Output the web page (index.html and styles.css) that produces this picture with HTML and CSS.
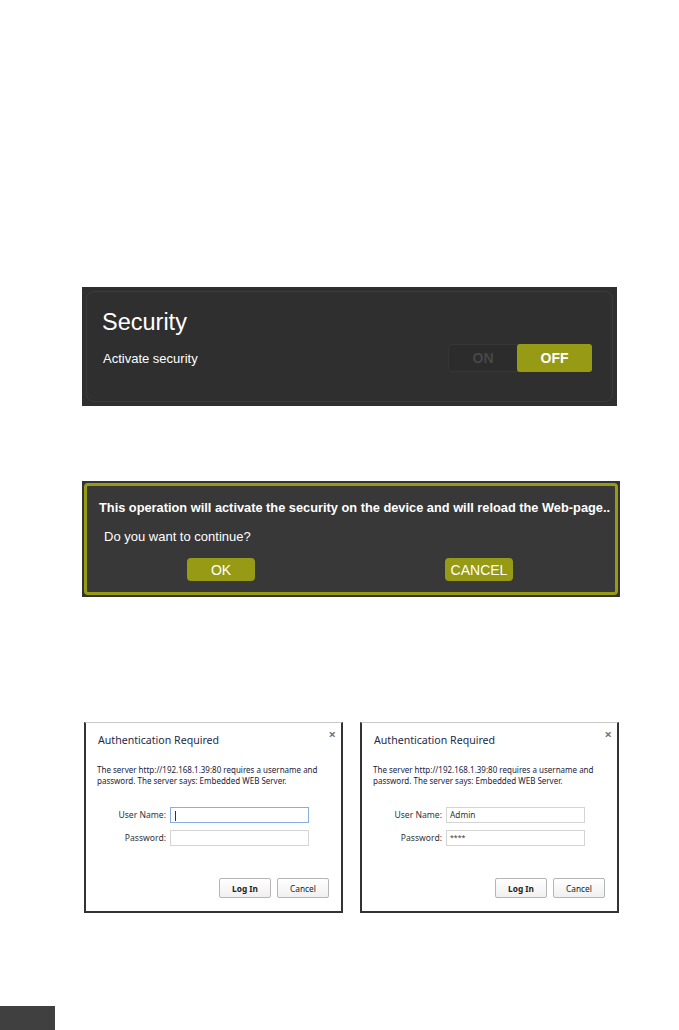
FILE: index.html
```html
<!DOCTYPE html>
<html lang="en">
<head>
    <meta charset="UTF-8">
    <meta name="viewport" content="width=device-width, initial-scale=1.0">
    <title>Security Settings</title>
    <link rel="stylesheet" href="styles.css">
</head>
<body>
    <!-- Security panel -->
    <div class="panel">
        <div class="panel-inner">
            <h2>Security</h2>
            <div class="panel-row">
                <span class="label">Activate security</span>
                <div class="toggle">
                    <span class="toggle-on">ON</span>
                    <span class="toggle-off">OFF</span>
                </div>
            </div>
        </div>
    </div>

    <!-- Confirm dialog -->
    <div class="confirm">
        <div class="confirm-inner">
            <p class="confirm-title">This operation will activate the security on the device and will reload the Web-page..</p>
            <p class="confirm-question">Do you want to continue?</p>
            <div class="confirm-buttons">
                <button class="olive-btn">OK</button>
                <button class="olive-btn">CANCEL</button>
            </div>
        </div>
    </div>

    <!-- Browser auth dialogs -->
    <div class="auth-row">
        <div class="auth">
            <span class="auth-close">&#215;</span>
            <h3>Authentication Required</h3>
            <p class="auth-text">The server http://192.168.1.39:80 requires a username and<br>password. The server says: Embedded WEB Server.</p>
            <div class="auth-fields">
                <label>User Name:</label>
                <div class="auth-input focused"><span class="caret"></span></div>
                <label>Password:</label>
                <div class="auth-input"></div>
            </div>
            <div class="auth-buttons">
                <button class="auth-btn"><b>Log In</b></button>
                <button class="auth-btn">Cancel</button>
            </div>
        </div>
        <div class="auth">
            <span class="auth-close">&#215;</span>
            <h3>Authentication Required</h3>
            <p class="auth-text">The server http://192.168.1.39:80 requires a username and<br>password. The server says: Embedded WEB Server.</p>
            <div class="auth-fields">
                <label>User Name:</label>
                <div class="auth-input">Admin</div>
                <label>Password:</label>
                <div class="auth-input stars">****</div>
            </div>
            <div class="auth-buttons">
                <button class="auth-btn"><b>Log In</b></button>
                <button class="auth-btn">Cancel</button>
            </div>
        </div>
    </div>

    <div class="page-tab"></div>
</body>
</html>
```

FILE: styles.css
```css
body {
    margin: 0;
    background: #ffffff;
    font-family: "Liberation Sans", Arial, sans-serif;
    width: 679px;
    height: 1030px;
    position: relative;
    overflow: hidden;
}
.panel {
    margin: 287px 0 0 82px;
    width: 535px;
    height: 119px;
    background: #2f2f2f;
    padding: 4px;
    box-sizing: border-box;
}
.panel-inner {
    height: 100%;
    border: 1px solid #3b3b3b;
    border-radius: 8px;
    box-sizing: border-box;
    padding: 0 20px 0 15px;
}
.panel-inner h2 {
    margin: 15px 0 0 0;
    color: #ffffff;
    font-weight: normal;
    font-size: 23.5px;
    line-height: 30px;
}
.panel-row {
    display: flex;
    justify-content: space-between;
    align-items: center;
    margin-top: 7px;
}
.label {
    color: #ffffff;
    font-size: 13px;
    padding-left: 1px;
}
.toggle {
    display: flex;
    width: 144px;
    height: 28px;
    background: #2c2c2c;
    border: 1px solid #363636;
    border-radius: 4px;
    box-sizing: border-box;
    font-weight: bold;
    font-size: 14px;
}
.toggle-on {
    flex: 1;
    display: flex;
    align-items: center;
    justify-content: center;
    color: #474747;
}
.toggle-off {
    width: 75px;
    display: flex;
    align-items: center;
    justify-content: center;
    color: #ffffff;
    background: #979a14;
    border-radius: 3px;
    margin: -1px -1px -1px 0;
}
.confirm {
    margin: 75px 0 0 82px;
    width: 538px;
    height: 116px;
    background: #333333;
    padding: 2px;
    box-sizing: border-box;
}
.confirm-inner {
    height: 100%;
    border: 3px solid #979a14;
    border-radius: 4px;
    box-sizing: border-box;
    background: #383838;
}
.confirm-title {
    margin: 14px 0 0 12px;
    color: #ffffff;
    font-weight: bold;
    font-size: 12.8px;
    white-space: nowrap;
}
.confirm-question {
    margin: 14px 0 0 17px;
    color: #ffffff;
    font-size: 13px;
}
.confirm-buttons {
    display: flex;
    gap: 190px;
    margin: 14px 0 0 100px;
}
.olive-btn {
    width: 68px;
    height: 23px;
    border: none;
    border-radius: 4px;
    background: #979a14;
    color: #ffffff;
    font-family: "Liberation Sans", Arial, sans-serif;
    font-size: 14px;
    padding: 0;
}
.auth-row {
    display: flex;
    gap: 17px;
    margin: 125px 0 0 84px;
}
.auth {
    position: relative;
    width: 259px;
    height: 191px;
    box-sizing: border-box;
    background: #ffffff;
    border: 1px solid #c8c8c8;
    border-left: 2px solid #333333;
    border-right: 2px solid #333333;
    border-bottom: 2px solid #333333;
    font-family: "Noto Sans", "Open Sans", sans-serif;
    color: #222222;
}
.auth-close {
    position: absolute;
    top: 2px;
    right: 5px;
    color: #777777;
    font-size: 13px;
    font-weight: bold;
}
.auth h3 {
    margin: 10px 0 0 12px;
    font-weight: normal;
    font-size: 10.6px;
    line-height: 14px;
    color: #1e2a4a;
}
.auth-text {
    margin: 17px 0 0 11px;
    font-size: 8px;
    line-height: 11px;
    color: #1b1b3a;
}
.auth-fields {
    display: grid;
    grid-template-columns: 80px 139px;
    column-gap: 4px;
    row-gap: 7px;
    align-items: center;
    margin-top: 21px;
}
.auth-fields label {
    text-align: right;
    font-size: 8.6px;
    color: #333333;
}
.auth-input {
    height: 16px;
    border: 1px solid #d4d4d4;
    box-sizing: border-box;
    font-size: 8.3px;
    line-height: 14px;
    padding-left: 3px;
    color: #333333;
}
.auth-input.focused {
    border-color: #88aee6;
}
.caret {
    display: inline-block;
    width: 1px;
    height: 10px;
    background: #333333;
    vertical-align: middle;
    margin-left: 1px;
}
.stars {
    font-size: 7px;
}
.auth-buttons {
    display: flex;
    justify-content: flex-end;
    gap: 6px;
    margin: 32px 12px 0 0;
}
.auth-btn {
    width: 52px;
    height: 20px;
    background: linear-gradient(#ffffff, #f0f0f0);
    border: 1px solid #b5b5b5;
    border-radius: 2px;
    font-family: "Noto Sans", "Open Sans", sans-serif;
    font-size: 8.3px;
    color: #222222;
    padding: 0;
}
.page-tab {
    position: absolute;
    left: 0;
    bottom: 0;
    width: 55px;
    height: 24px;
    background: #404040;
}
```
